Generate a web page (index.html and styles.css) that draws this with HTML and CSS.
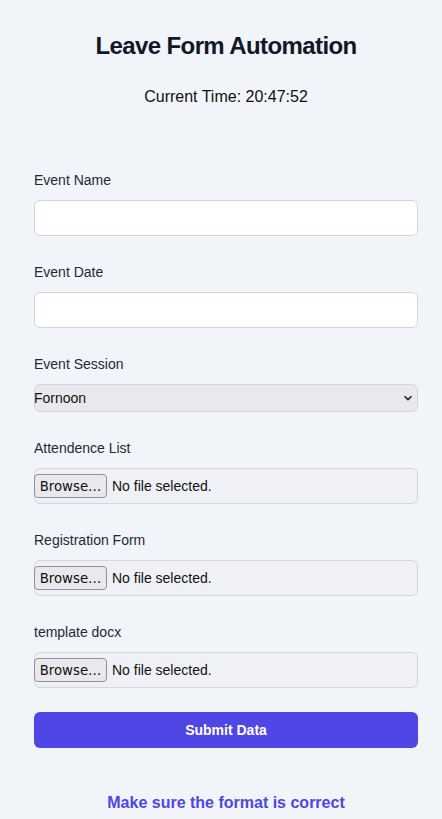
FILE: index.html
```html
<!DOCTYPE html>
<html lang="en">
<head>
<meta charset="utf-8">
<title>Leave Form Automation</title>
<link rel="stylesheet" href="styles.css">
</head>
<body>
<main class="page">
  <h1 class="title">Leave Form Automation</h1>
  <p class="time">Current Time: 20:47:52</p>
  <form class="form">
    <div class="group">
      <label class="label" for="name">Event Name</label>
      <input class="text-input" id="name" type="text">
    </div>
    <div class="group">
      <label class="label" for="date">Event Date</label>
      <input class="text-input" id="date" type="text">
    </div>
    <div class="group">
      <label class="label" for="session">Event Session</label>
      <div class="select-box">
        <select class="select" id="session"><option>Fornoon</option><option>Afternoon</option></select>
        <svg class="chev" width="10" height="6" viewBox="0 0 10 6"><path d="M1.5 1.2 L5 4.6 L8.5 1.2" fill="none" stroke="#1f1f1f" stroke-width="1.6"/></svg>
      </div>
    </div>
    <div class="group">
      <span class="label">Attendence List</span>
      <label class="file-box"><span class="browse">Browse…</span><span class="file-text">No file selected.</span></label>
    </div>
    <div class="group">
      <span class="label">Registration Form</span>
      <label class="file-box"><span class="browse">Browse…</span><span class="file-text">No file selected.</span></label>
    </div>
    <div class="group last">
      <span class="label">template docx</span>
      <label class="file-box"><span class="browse">Browse…</span><span class="file-text">No file selected.</span></label>
    </div>
    <button class="submit" type="button">Submit Data</button>
  </form>
  <p class="note">Make sure the format is correct</p>
</main>
</body>
</html>
```

FILE: styles.css
```css
* { box-sizing: border-box; }
html, body { margin: 0; padding: 0; }
body {
  background: #f1f4f9;
  font-family: "Liberation Sans", Arial, sans-serif;
  color: #111827;
}
.page {
  padding: 30px 24px 0 34px;
  width: 442px;
}
.title {
  margin: 0;
  font-size: 24px;
  line-height: 32px;
  font-weight: 700;
  letter-spacing: -0.6px;
  text-align: center;
  color: #111827;
  width: 384px;
}
.time {
  margin: 23px 0 0;
  font-size: 16px;
  line-height: 24px;
  text-align: center;
  width: 384px;
  color: #111;
}
.form {
  margin-top: 61px;
  width: 384px;
  display: flex;
  flex-direction: column;
}
.group {
  display: flex;
  flex-direction: column;
  margin-bottom: 26px;
}
.group.last { margin-bottom: 24px; }
.label {
  font-size: 14px;
  line-height: 20px;
  margin-bottom: 10px;
  color: #1f2937;
}
.text-input {
  height: 36px;
  width: 100%;
  border: 1px solid #d1d5db;
  border-radius: 6px;
  background: #fff;
  font: 14px "Liberation Sans", Arial, sans-serif;
  padding: 0 8px;
}
.select-box {
  height: 28px;
  display: flex;
  align-items: center;
  border: 1px solid #d4d6dc;
  border-radius: 6px;
  background: #e9e9ed;
  padding-right: 4px;
}
.select {
  appearance: none;
  -webkit-appearance: none;
  flex: 1;
  border: none;
  background: transparent;
  font: 14px "Liberation Sans", Arial, sans-serif;
  color: #111;
  padding: 0;
  margin-left: -1px;
  height: 26px;
  outline: none;
}
.chev { flex: none; }
.file-box {
  height: 36px;
  display: flex;
  align-items: center;
  gap: 5px;
  border: 1px solid #d4d6dc;
  border-radius: 6px;
  background: #eff1f6;
  cursor: pointer;
}
.browse {
  margin-left: -1px;
  height: 24px;
  width: 73px;
  display: flex;
  align-items: center;
  justify-content: center;
  background: #e9e9ed;
  border: 1px solid #8f8f9d;
  border-radius: 4px;
  font: 13.3px "DejaVu Sans", sans-serif;
  color: #111;
}
.file-text {
  font-size: 14px;
  color: #111;
}
.submit {
  height: 36px;
  width: 100%;
  border: none;
  border-radius: 6px;
  background: #4f46e5;
  color: #fff;
  font: 700 14px "Liberation Sans", Arial, sans-serif;
}
.note {
  margin: 43px 0 0;
  width: 384px;
  text-align: center;
  font-size: 16px;
  line-height: 24px;
  font-weight: 700;
  color: #4f46e5;
}
```
